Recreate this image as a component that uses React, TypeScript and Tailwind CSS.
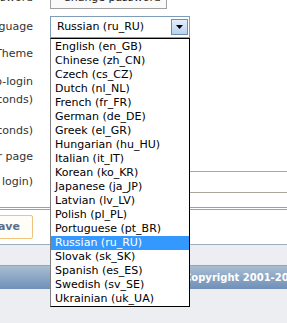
import React from "react";

const langs = [
  "English (en_GB)",
  "Chinese (zh_CN)",
  "Czech (cs_CZ)",
  "Dutch (nl_NL)",
  "French (fr_FR)",
  "German (de_DE)",
  "Greek (el_GR)",
  "Hungarian (hu_HU)",
  "Italian (it_IT)",
  "Korean (ko_KR)",
  "Japanese (ja_JP)",
  "Latvian (lv_LV)",
  "Polish (pl_PL)",
  "Portuguese (pt_BR)",
  "Russian (ru_RU)",
  "Slovak (sk_SK)",
  "Spanish (es_ES)",
  "Swedish (sv_SE)",
  "Ukrainian (uk_UA)",
];

function Label({ children }: { children: React.ReactNode }) {
  return (
    <div className="w-[33px] shrink-0 flex flex-col items-end whitespace-nowrap">
      {children}
    </div>
  );
}

export default function App() {
  return (
    <div className="relative w-[287px] h-[323px] overflow-hidden bg-[#eceef1] text-[11px] text-[#333] font-['DejaVu_Sans',Verdana,sans-serif]">
      {/* form area */}
      <div className="bg-white -mt-[16px]">
        <div className="flex items-center h-[28px]">
          <Label>Password</Label>
          <button className="ml-[17px] h-[22px] w-[117px] border border-[#a0a0a0] bg-[#fafafa] text-left pl-[12px] text-[#222] whitespace-nowrap">
            Change password
          </button>
        </div>
        <div className="flex items-center h-[30px]">
          <Label>Language</Label>
          <div className="relative ml-[17px]">
            <div className="h-[22px] w-[140px] border border-[#7f9db9] bg-white flex items-center justify-between pl-[6px] pr-[1px] text-black">
              <span>Russian (ru_RU)</span>
              <div className="w-[17px] h-[16px] border border-[#6d8db5] bg-gradient-to-b from-[#e4eefb] to-[#b9d1ef] flex items-center justify-center">
                <svg width="7" height="4" viewBox="0 0 7 4">
                  <path d="M0 0H7L3.5 4Z" fill="#000" />
                </svg>
              </div>
            </div>
            <div className="absolute left-0 top-[22px] w-[140px] z-10 bg-white border border-black border-l-[#808080] pt-[1px] text-black">
              {langs.map((l) => (
                <div
                  key={l}
                  className={
                    l === "Russian (ru_RU)"
                      ? "h-[14px] leading-[14px] pl-[4px] whitespace-nowrap bg-[#3399ff] text-white"
                      : "h-[14px] leading-[14px] pl-[4px] whitespace-nowrap"
                  }
                >
                  {l}
                </div>
              ))}
            </div>
          </div>
        </div>
        <div className="flex items-center h-[24px]">
          <Label>Theme</Label>
        </div>
        <div className="flex items-center h-[50px]">
          <Label>
            <div className="leading-[18px]">Auto-login</div>
            <div className="leading-[18px]">(seconds)</div>
          </Label>
        </div>
        <div className="flex items-center h-[30px]">
          <Label>Timeout (seconds)</Label>
        </div>
        <div className="flex items-center h-[22px]">
          <Label>Items per page</Label>
        </div>
        <div className="flex items-center h-[28px]">
          <Label>(auto login)</Label>
          <div className="ml-[17px] h-[22px] w-[260px] shrink-0 border border-[#aca899] bg-white" />
        </div>
        <div className="h-[11px]" />
        <div className="h-[3px] border-t border-b border-[#8fa3bd]" />
        <div className="h-[35px] border-b border-[#9eadbf] pt-[5px]">
          <div className="w-[33px] flex justify-end">
            <button className="shrink-0 h-[24px] px-[12px] border border-[#f0c27a] rounded-[2px] bg-[#fffdf8] text-[#5b6f8c] font-bold whitespace-nowrap">
              Save
            </button>
          </div>
        </div>
      </div>
      <div className="h-[20px]" />
      <div className="h-[24px] border-t border-[#8ea6c2] bg-gradient-to-b from-[#a9bdd2] to-[#6f90b8] flex items-center pl-[184px] text-white font-bold text-[10px] whitespace-nowrap">
        Copyright 2001-2010
      </div>
    </div>
  );
}
